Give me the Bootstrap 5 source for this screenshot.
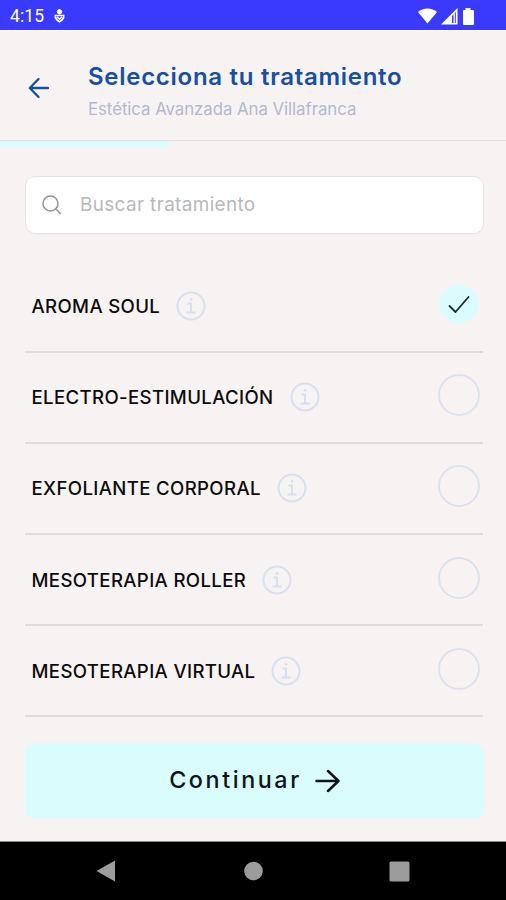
<!DOCTYPE html>
<html lang="es">
<head>
<meta charset="utf-8">
<meta name="viewport" content="width=device-width, initial-scale=1">
<title>Selecciona tu tratamiento</title>
<link href="https://cdn.jsdelivr.net/npm/bootstrap@5.3.0/dist/css/bootstrap.min.css" rel="stylesheet">
<style>
body{font-family:Inter,"Liberation Sans",sans-serif;background:#f7f3f2;color:#101010}
.screen{height:900px;overflow:hidden}
svg{display:block;flex:none}
.status-bar{height:30px;background:#3a3aff;padding:2px 32px 0 10px}
.clock{font:400 17.5px/28px Roboto,sans-serif;letter-spacing:.1px}
.app-head{height:111px;border-bottom:1.5px solid #e3dfde;border-top:1px solid #fff;padding:4px 28px 0}
.app-title{font-size:24px;font-weight:600;line-height:30px;color:#184fa3;letter-spacing:.72px;margin:8px 0 5px -1px}
.app-sub{font-size:16.8px;line-height:24px;color:#b1b9d0;letter-spacing:-.04px;margin-left:-1px}
.step-progress{height:6px;border-radius:0;background:transparent}
.step-progress .progress-bar{width:33.4%;background:#d9fcfc}
.search-box{height:58px;margin:29px 22px 0 25px;border:1.5px solid #e6e3e4;border-radius:10px;background:#fff;padding-left:16px}
.search-box .form-control{font-size:18.9px;padding:1px 0 0;margin-left:19px;letter-spacing:.37px}
.search-box .form-control::placeholder{color:#b7b8bc;opacity:1}
.treatments{margin:27.5px 23px 0 25px}
.treatments .list-group-item{height:91.2px;background:transparent;color:#0c0c0c;border:0;border-bottom:2px solid #e0dcdb;padding:0 3.5px 1px 6.5px}
.treatments .list-group-item:last-child{border-bottom-width:2px}
.t-name{font-size:18.6px;font-weight:500;letter-spacing:.36px;line-height:28px;margin-right:16px}
.t-name,.t-name + svg{margin-top:1px}
.pick{width:42px;height:42px;border:2px solid #dbe2ee;border-radius:50%;margin-bottom:3px}
.pick-on{background:#d9fcfc;border-color:#f3f5f5}
.btn-next{height:75px;margin:0 22px 0 25px;background:#d9fcfc;border:0;border-radius:9px;font-size:23.3px;font-weight:550;letter-spacing:2.6px;color:#101418}
.btn-next svg{margin-left:13px}
.nav-keys{height:59px;background:#000;border-top:1px solid #8b8b8b;margin-top:23px}
</style>
</head>
<body>
<div class="screen d-flex flex-column">
  <div class="status-bar d-flex align-items-center text-white">
    <span class="clock">4:15</span>
    <svg class="ms-2" width="15" height="16" viewBox="0 0 15 16" fill="none" stroke="#fff" stroke-width="1.6"><circle cx="7.500" cy="3.800" r="2.200" fill="#fff" stroke-width="1"/><path d="M2.500 7.500h10M3 8.500C3.500 11 5.500 12.500 7.500 13.800 9.500 12.500 11.500 11 12 8.500M5 9l2.500 2L10 9"/></svg>
    <div class="ms-auto d-flex align-items-center">
      <svg width="19" height="16" viewBox="0 0 19 16"><path d="M0 4C5-.8 14-.8 19 4L9.500 15.500Z" fill="#fff"/></svg>
      <svg class="ms-1" width="17" height="17" viewBox="0 0 17 17"><path d="M0 16.500 16.500 0v16.500Z" fill="#fff"/><path d="M11 8v7h1.500V6.500ZM13.800 5v10h1V4Z" fill="#3a3aff"/></svg>
      <svg class="ms-1" width="12" height="17" viewBox="0 0 12 17"><path d="M3.500 0h5v2H11q1 0 1 1v13q0 1-1 1H2q-1 0-1-1V3q0-1 1-1h1.500Z" fill="#fff"/></svg>
    </div>
  </div>
  <header class="app-head d-flex align-items-center">
    <svg width="21" height="22" viewBox="0 0 21 22" fill="none" stroke="#184fa3" stroke-width="2.300" stroke-linecap="round" stroke-linejoin="round"><path d="M20 11H2M10.500 2 1.800 11l8.700 9"/></svg>
    <div class="ms-auto flex-grow-1 ps-4"><div class="ps-3">
      <h1 class="app-title text-nowrap">Selecciona tu tratamiento</h1>
      <div class="app-sub text-nowrap">Estética Avanzada Ana Villafranca</div>
    </div></div>
  </header>
  <div class="progress step-progress"><div class="progress-bar"></div></div>
  <div class="search-box d-flex align-items-center">
    <svg width="19" height="20" viewBox="0 0 19 20" fill="none" stroke="#929398" stroke-width="1.500" stroke-linecap="round"><circle cx="8.500" cy="8.500" r="7.500"/><path d="m14 14 4.300 4.500"/></svg>
    <input class="form-control border-0 bg-transparent shadow-none" type="text" placeholder="Buscar tratamiento">
  </div>
  <ul class="list-group list-group-flush treatments" id="list"></ul>
  <button class="btn btn-next d-flex align-items-center justify-content-center mt-auto" type="button">Continuar
    <svg width="25" height="24" viewBox="0 0 25 24" fill="none" stroke="#101418" stroke-width="2.500" stroke-linecap="round" stroke-linejoin="round"><path d="M1.500 12h22M13 2l10.500 10L13 22"/></svg>
  </button>
  <nav class="nav-keys d-flex align-items-center flex-shrink-0">
    <svg width="506" height="58" viewBox="0 0 506 58" fill="#9c9c9c"><path d="M96.500 29 115 18.500v21Z"/><circle cx="253.500" cy="29" r="9.300"/><rect x="389.500" y="19.500" width="20" height="20" rx="1.500"/></svg>
  </nav>
</div>
<template id="row">
  <li class="list-group-item d-flex align-items-center">
    <span class="t-name text-nowrap"></span>
    <svg width="30" height="30" viewBox="0 0 30 30" fill="none" stroke="#d8e0f0" stroke-width="2"><circle cx="15" cy="15" r="13.500"/><path d="M11.500 12.500H15V21M10.500 21.500h9"/><circle cx="15" cy="8.300" r="1" fill="#d8e0f0" stroke-width="1"/></svg>
    <span class="pick ms-auto d-flex align-items-center justify-content-center"></span>
  </li>
</template>
<script>
const names = ["AROMA SOUL","ELECTRO-ESTIMULACIÓN","EXFOLIANTE CORPORAL","MESOTERAPIA ROLLER","MESOTERAPIA VIRTUAL"];
names.forEach((name, i) => {
  const li = document.getElementById("row").content.cloneNode(true);
  li.querySelector(".t-name").textContent = name;
  if (i === 0) {
    const pick = li.querySelector(".pick");
    pick.classList.add("pick-on");
    pick.innerHTML = '<svg width="22" height="19" viewBox="0 0 22 19" fill="none" stroke="#1b2a2c" stroke-width="1.800" stroke-linecap="round" stroke-linejoin="round"><path d="m1.500 11 6 6L20.500 2"/></svg>';
  }
  document.getElementById("list").append(li);
});
</script>
<script src="https://cdn.jsdelivr.net/npm/bootstrap@5.3.0/dist/js/bootstrap.bundle.min.js"></script>
</body>
</html>
